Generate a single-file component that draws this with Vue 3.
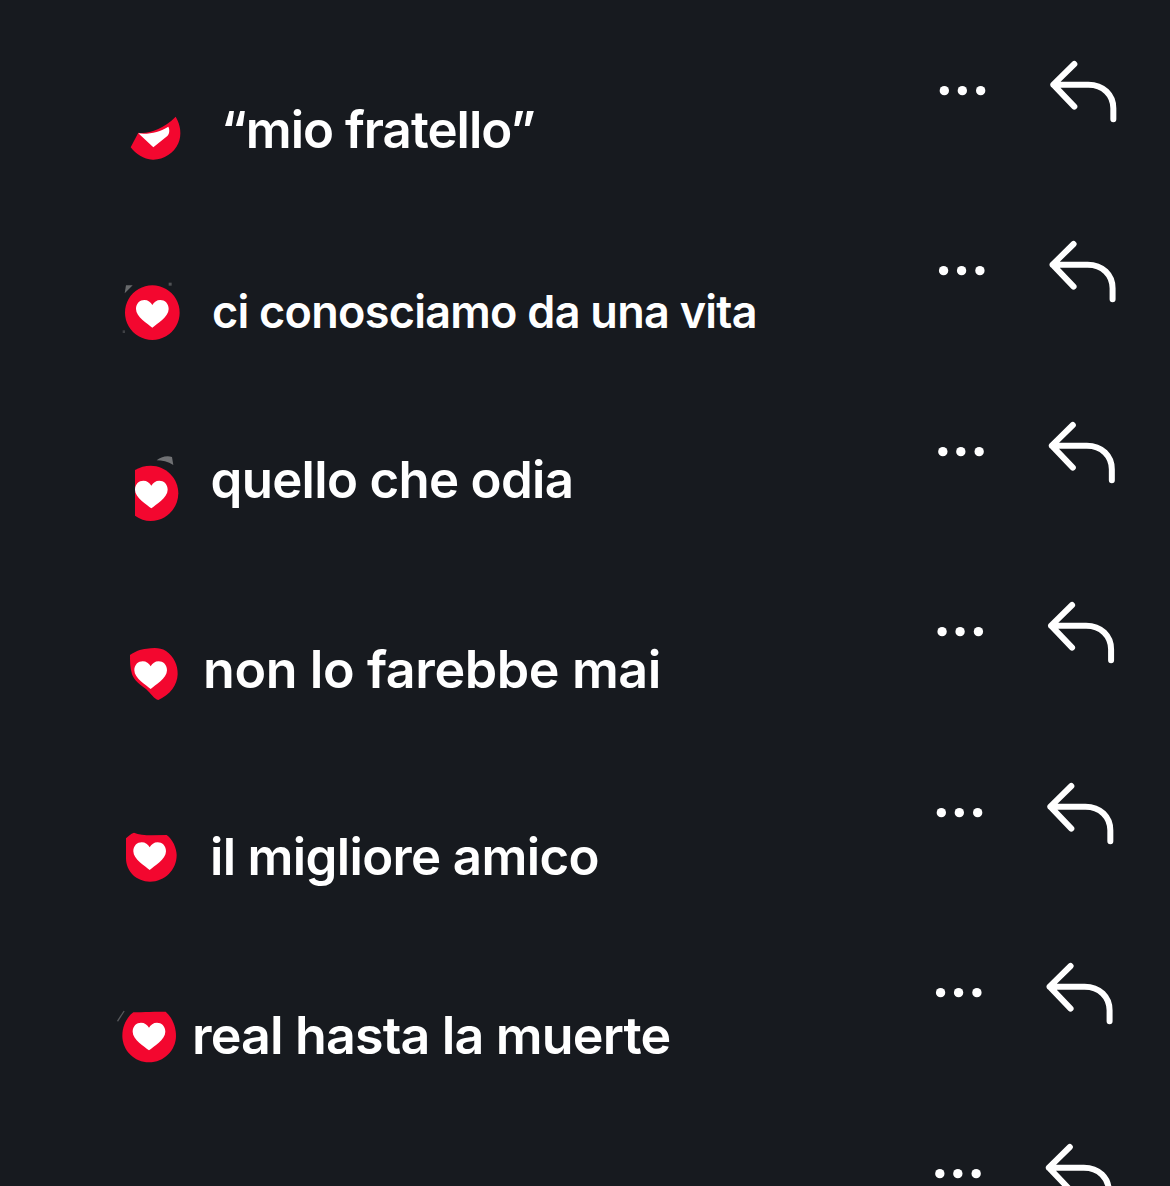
<script setup>
const heart = 'M0 41C-13 30-49 9-49-15C-49-32-37-42-24-42C-13-42-5-36 0-27C5-36 13-42 24-42C37-42 49-32 49-15C49 9 13 30 0 41Z'
const red = '#f3072f'
const rows = [
  { text: '“mio fratello”', size: 51, track: -1, x: 110, y: 30, vb: '0 0 300 240', h: 80, tx: 111, ty: 40,
    shape: 'M62 172L85 128C115 132 160 118 197 80C212 105 216 135 205 160C192 190 160 210 128 209C100 208 78 192 62 172Z',
    white: 'M85 130C115 134 150 126 175 110C180 120 178 132 172 138L130 172Z', smudges: [] },
  { text: 'ci conosciamo da una vita', size: 45, track: -0.74, x: 110, y: 29.5, vb: '0 0 300 240', h: 80, tx: 102, ty: 41,
    shape: 'M127 46A82 82 0 1 1 126.9 46Z', hx: 127, hy: 132,
    smudges: [{ d: 'M44 70L48 46L68 46Z', o: 0.5 }, { d: 'M176 38h9v9h-9Z', o: 0.35 }, { d: 'M38 181h7v8h-7Z', o: 0.25 }] },
  { text: 'quello che odia', size: 51, track: -0.7, x: 110, y: 24, vb: '0 0 300 255', h: 85, tx: 100.5, ty: 29,
    shape: 'M75 75C90 66 105 62 122 62C168 62 205 100 205 145C205 190 168 228 122 228C105 228 90 222 75 212Z', hx: 124, hy: 149,
    smudges: [{ d: 'M140 46C150 36 172 30 186 36L190 60C175 50 155 46 140 46Z', o: 0.55 }] },
  { text: 'non lo farebbe mai', size: 52, track: -0.4, x: 110, y: 33.5, vb: '0 0 300 225', h: 75, tx: 93, ty: 38.5,
    shape: 'M60 60C75 50 90 42 110 41C130 38 150 36 168 48C192 64 204 92 203 118C202 150 180 180 145 195C132 192 125 178 108 162C88 148 72 135 66 118C60 98 60 78 60 60Z', hx: 122, hy: 121, smudges: [] },
  { text: 'il migliore amico', size: 51, track: -0.65, x: 110, y: 38, vb: '0 0 300 210', h: 70, tx: 100, ty: 45,
    shape: 'M48 55C55 48 62 42 72 38C85 44 105 46 125 46L170 45C188 58 200 85 200 105C200 150 164 185 120 185C80 185 48 155 48 115Z', hx: 119, hy: 109, smudges: [] },
  { text: 'real hasta la muerte', size: 52, track: -0.85, x: 105, y: 37.5, vb: '0 0 300 210', h: 70, tx: 87, ty: 43,
    shape: 'M85 37C110 36 160 35 182 35C202 52 213 82 213 107C213 151 176 187 132 187C88 187 52 151 52 107C52 78 65 52 85 37Z', hx: 132, hy: 110,
    smudges: [{ d: 'M36 62L56 32L59 34L39 65Z', o: 0.4 }] }
]
const actions = [0, 1, 2, 3, 4, 5, 6].map((i) => ({ id: i, shift: -i * 0.75 }))
</script>

<template>
  <main class="screen">
    <section class="messages">
      <article v-for="row in rows" :key="row.text" class="message" :style="{ paddingLeft: row.x + 'px' }">
        <svg class="badge" :viewBox="row.vb" :style="{ height: row.h + 'px', marginTop: row.y + 'px' }" aria-hidden="true">
          <path v-for="s in row.smudges" :key="s.d" :d="s.d" fill="#b9b9b9" :opacity="s.o" />
          <path :d="row.shape" :fill="red" />
          <path v-if="row.white" :d="row.white" fill="#fff" />
          <path v-else :d="heart" fill="#fff" :transform="`translate(${row.hx} ${row.hy})`" />
        </svg>
        <p class="label" :style="{ marginLeft: row.tx - 100 + 'px', marginTop: row.ty + 'px', fontSize: row.size + 'px', letterSpacing: row.track + 'px' }">{{ row.text }}</p>
      </article>
    </section>
    <section class="actions">
      <div v-for="a in actions" :key="a.id" class="action" :style="{ transform: `translateX(${a.shift}px)` }">
        <svg viewBox="0 0 600 240" class="action-icons" aria-hidden="true">
          <circle cx="58" cy="122" r="14" />
          <circle cx="112" cy="122" r="14" />
          <circle cx="167" cy="122" r="14" />
          <path d="M448 42L385 104L448 170M385 104H490C535 104 565 135 565 175V208" />
        </svg>
      </div>
    </section>
  </main>
</template>

<style>
html, body { margin: 0; background: #171a1f; overflow: hidden; }
</style>

<style scoped>
.screen {
  width: 1170px;
  height: 1186px;
  overflow: hidden;
  display: flex;
  background: #171a1f;
  font-family: Inter, "Liberation Sans", sans-serif;
}
.messages {
  flex: 0 0 925px;
  padding-top: 60px;
}
.message {
  height: 180.5px;
  display: flex;
  align-items: flex-start;
  box-sizing: border-box;
}
.badge {
  width: 100px;
  flex: none;
  overflow: visible;
}
.label {
  margin-bottom: 0;
  margin-right: 0;
  color: #fff;
  font-weight: 600;
  line-height: 60px;
  white-space: nowrap;
}
.actions {
  flex: 1;
  padding-top: 50px;
}
.action {
  height: 180.45px;
}
.action-icons {
  display: block;
  width: 200px;
  height: 80px;
}
.action-icons circle {
  fill: #fff;
}
.action-icons path {
  fill: none;
  stroke: #fff;
  stroke-width: 18;
  stroke-linecap: round;
  stroke-linejoin: round;
}
</style>
